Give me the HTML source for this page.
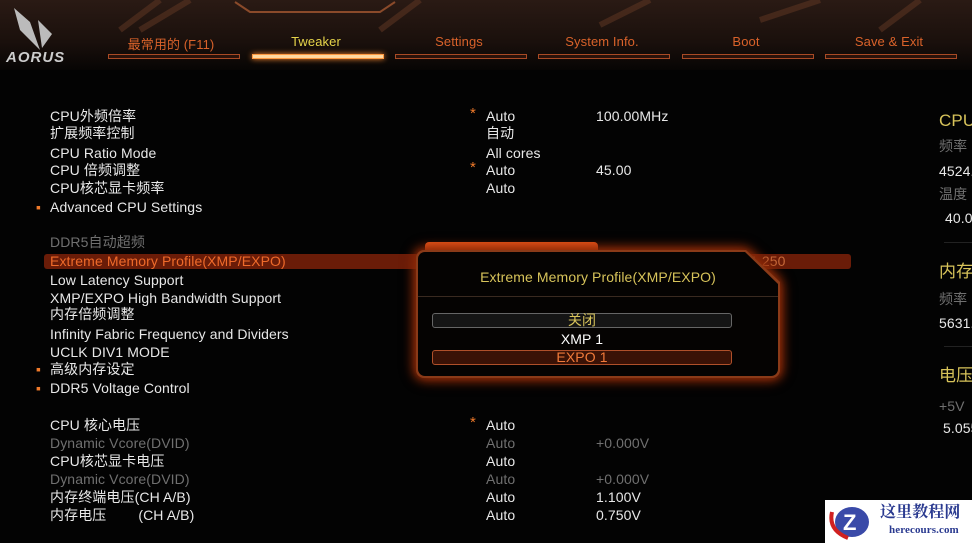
<!DOCTYPE html><html><head><meta charset="utf-8"><style>
*{margin:0;padding:0;box-sizing:border-box}
body{width:972px;height:543px;background:#030303;overflow:hidden;position:relative;font-family:"Liberation Sans","Noto Sans CJK SC",sans-serif;font-size:14px;letter-spacing:0.1px;color:#e8e8e8}
.a{position:absolute;white-space:nowrap;line-height:16px}
.hdr{position:absolute;left:0;top:0;width:972px;height:70px;background:linear-gradient(180deg,#2a1a14 0%,#1a100c 60%,#070504 100%)}
.tab{position:absolute;top:34px;color:#d9622a;font-size:13px;text-align:center;width:132px}
.ln{position:absolute;top:54px;height:5px;width:132px;border:1px solid #a84a25;background:#2a120a}
.g{color:#707070}
.y{color:#d7c35a}
.s{color:#f07a2a;font-size:15px}
</style></head><body>
<div class="hdr"></div>
<svg class="a" style="left:0;top:0" width="972" height="70"><g stroke="#5a3422" stroke-width="6" opacity=".6" fill="none"><path d="M120 30 L160 0 M140 30 L190 0 M380 30 L420 0 M600 25 L650 0 M760 20 L820 0 M880 30 L920 0"/></g><path d="M235 2 L250 12 L380 12 L395 2" stroke="#8a4a2a" stroke-width="2" fill="none"/><path d="M14 8 L30 22 L40 50 L20 30 Z M38 20 L52 34 L42 48 Z" fill="#bbb"/></svg>
<div class="a" style="left:6px;top:50px;color:#ccc;font-style:italic;font-weight:bold;font-size:15px;letter-spacing:1px">AORUS</div>
<div class="tab" style="left:105px">最常用的 (F11)</div><div class="ln" style="left:108px"></div>
<div class="tab" style="left:250px;color:#e6d44a">Tweaker</div><div class="ln" style="left:252px;background:#ffd8a0;border-color:#ff9a40;box-shadow:0 0 6px #ff8a30"></div>
<div class="tab" style="left:393px">Settings</div><div class="ln" style="left:395px"></div>
<div class="tab" style="left:536px">System Info.</div><div class="ln" style="left:538px"></div>
<div class="tab" style="left:680px">Boot</div><div class="ln" style="left:682px"></div>
<div class="tab" style="left:823px">Save &amp; Exit</div><div class="ln" style="left:825px"></div>

<div class="a" style="left:44px;top:254px;width:807px;height:15px;background:#6a1c08;border-radius:3px"></div>
<div class="a" style="left:50px;top:108px">CPU外频倍率</div>
<div class="a" style="left:50px;top:125px">扩展频率控制</div>
<div class="a" style="left:50px;top:145px">CPU Ratio Mode</div>
<div class="a" style="left:50px;top:162px">CPU 倍频调整</div>
<div class="a" style="left:50px;top:180px">CPU核芯显卡频率</div>
<div class="a" style="left:36px;top:199px;color:#f07a2a">▪</div><div class="a" style="left:50px;top:199px">Advanced CPU Settings</div>
<div class="a g" style="left:50px;top:234px">DDR5自动超频</div>
<div class="a" style="left:50px;top:253px;color:#ee6a2a">Extreme Memory Profile(XMP/EXPO)</div>
<div class="a" style="left:50px;top:272px">Low Latency Support</div>
<div class="a" style="left:50px;top:290px">XMP/EXPO High Bandwidth Support</div>
<div class="a" style="left:50px;top:306px">内存倍频调整</div>
<div class="a" style="left:50px;top:326px">Infinity Fabric Frequency and Dividers</div>
<div class="a" style="left:50px;top:344px">UCLK DIV1 MODE</div>
<div class="a" style="left:36px;top:361px;color:#f07a2a">▪</div><div class="a" style="left:50px;top:361px">高级内存设定</div>
<div class="a" style="left:36px;top:380px;color:#f07a2a">▪</div><div class="a" style="left:50px;top:380px">DDR5 Voltage Control</div>
<div class="a" style="left:50px;top:417px">CPU 核心电压</div>
<div class="a g" style="left:50px;top:435px">Dynamic Vcore(DVID)</div>
<div class="a" style="left:50px;top:453px">CPU核芯显卡电压</div>
<div class="a g" style="left:50px;top:471px">Dynamic Vcore(DVID)</div>
<div class="a" style="left:50px;top:489px">内存终端电压(CH A/B)</div>
<div class="a" style="left:50px;top:507px">内存电压&nbsp;&nbsp;&nbsp;&nbsp;&nbsp;&nbsp;&nbsp;&nbsp;(CH A/B)</div>

<div class="a s" style="left:470px;top:106px">*</div><div class="a" style="left:486px;top:108px">Auto</div><div class="a" style="left:596px;top:108px">100.00MHz</div>
<div class="a" style="left:486px;top:125px">自动</div>
<div class="a" style="left:486px;top:145px">All cores</div>
<div class="a s" style="left:470px;top:160px">*</div><div class="a" style="left:486px;top:162px">Auto</div><div class="a" style="left:596px;top:162px">45.00</div>
<div class="a" style="left:486px;top:180px">Auto</div>
<div class="a s" style="left:470px;top:415px">*</div><div class="a" style="left:486px;top:417px">Auto</div>
<div class="a g" style="left:486px;top:435px">Auto</div><div class="a g" style="left:596px;top:435px">+0.000V</div>
<div class="a" style="left:486px;top:453px">Auto</div>
<div class="a g" style="left:486px;top:471px">Auto</div><div class="a g" style="left:596px;top:471px">+0.000V</div>
<div class="a" style="left:486px;top:489px">Auto</div><div class="a" style="left:596px;top:489px">1.100V</div>
<div class="a" style="left:486px;top:507px">Auto</div><div class="a" style="left:596px;top:507px">0.750V</div>
<div class="a" style="left:750px;top:253px;color:#c86a3a">1.250</div>

<div class="a" style="left:425px;top:242px;width:173px;height:8px;background:#e8551a;border-radius:4px 4px 0 0"></div>
<div class="a" style="left:416px;top:250px;width:364px;height:128px;filter:drop-shadow(0 0 6px #9a3008) drop-shadow(0 0 4px #7a2006)">
<div class="a" style="left:0;top:0;width:364px;height:128px;background:#8a3a18;border-radius:8px;clip-path:polygon(0 0,330px 0,364px 32px,364px 128px,0 128px)"></div>
<div class="a" style="left:2px;top:2px;width:360px;height:124px;background:#050302;border-radius:7px;clip-path:polygon(0 0,327px 0,360px 32px,360px 124px,0 124px)"></div>
</div>
<div class="a y" style="left:416px;top:269px;width:364px;text-align:center">Extreme Memory Profile(XMP/EXPO)</div>
<div class="a" style="left:418px;top:296px;width:360px;height:1px;background:#3a2a20"></div>
<div class="a y" style="left:432px;top:313px;width:300px;height:15px;border:1px solid #666;border-radius:3px;background:#151515;text-align:center;line-height:13px">关闭</div>
<div class="a" style="left:432px;top:331px;width:300px;text-align:center;color:#fff">XMP 1</div>
<div class="a" style="left:432px;top:350px;width:300px;height:15px;border:1px solid #b0502a;border-radius:3px;background:#3a1206;text-align:center;line-height:13px;color:#f07a3a">EXPO 1</div>

<div class="a" style="left:939px;top:111px;color:#d7c35a;font-size:17px;line-height:20px">CPU</div>
<div class="a g" style="left:939px;top:138px">频率</div>
<div class="a" style="left:939px;top:163px">4524.</div>
<div class="a g" style="left:939px;top:186px">温度</div>
<div class="a" style="left:945px;top:210px">40.0</div>
<div class="a" style="left:944px;top:242px;width:28px;height:1px;background:#222"></div>
<div class="a" style="left:939px;top:262px;color:#d7c35a;font-size:17px;line-height:20px">内存</div>
<div class="a g" style="left:939px;top:291px">频率</div>
<div class="a" style="left:939px;top:315px">5631.</div>
<div class="a" style="left:944px;top:346px;width:28px;height:1px;background:#222"></div>
<div class="a" style="left:939px;top:366px;color:#d7c35a;font-size:17px;line-height:20px">电压</div>
<div class="a g" style="left:939px;top:398px">+5V</div>
<div class="a" style="left:943px;top:420px">5.055</div>

<div class="a" style="left:825px;top:500px;width:147px;height:43px;background:#fff"></div>
<svg class="a" style="left:826px;top:502px" width="50" height="40"><ellipse cx="26" cy="20" rx="17" ry="15" fill="#3a4aa8"/><path d="M6 10 Q2 28 22 36" stroke="#d02020" stroke-width="4" fill="none"/><text x="17" y="28" font-size="22" font-weight="bold" fill="#fff" font-family="Liberation Sans">Z</text></svg>
<div class="a" style="left:880px;top:504px;color:#2a3a90;font-weight:bold;font-size:16px;line-height:18px;font-family:'Liberation Serif','Noto Serif CJK SC',serif">这里教程网</div>
<div class="a" style="left:889px;top:524px;color:#2a3a90;font-size:11px;line-height:13px;font-family:'Liberation Serif',serif;font-weight:bold">herecours.com</div>
</body></html>
